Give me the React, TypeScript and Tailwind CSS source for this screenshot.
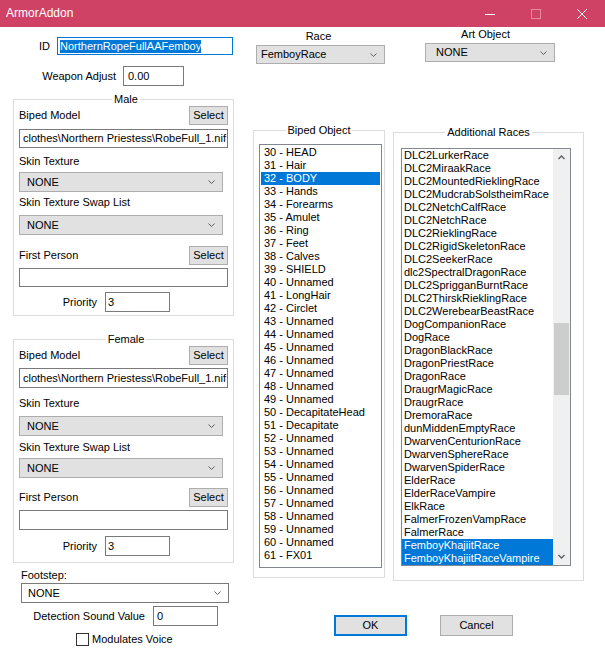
import React from 'react';

const bipedItems = [
  '30 - HEAD', '31 - Hair', '32 - BODY', '33 - Hands', '34 - Forearms', '35 - Amulet', '36 - Ring', '37 - Feet',
  '38 - Calves', '39 - SHIELD', '40 - Unnamed', '41 - LongHair', '42 - Circlet', '43 - Unnamed', '44 - Unnamed',
  '45 - Unnamed', '46 - Unnamed', '47 - Unnamed', '48 - Unnamed', '49 - Unnamed', '50 - DecapitateHead',
  '51 - Decapitate', '52 - Unnamed', '53 - Unnamed', '54 - Unnamed', '55 - Unnamed', '56 - Unnamed', '57 - Unnamed',
  '58 - Unnamed', '59 - Unnamed', '60 - Unnamed', '61 - FX01',
];

const races = [
  'DLC2LurkerRace', 'DLC2MiraakRace', 'DLC2MountedRieklingRace', 'DLC2MudcrabSolstheimRace', 'DLC2NetchCalfRace',
  'DLC2NetchRace', 'DLC2RieklingRace', 'DLC2RigidSkeletonRace', 'DLC2SeekerRace', 'dlc2SpectralDragonRace',
  'DLC2SprigganBurntRace', 'DLC2ThirskRieklingRace', 'DLC2WerebearBeastRace', 'DogCompanionRace', 'DogRace',
  'DragonBlackRace', 'DragonPriestRace', 'DragonRace', 'DraugrMagicRace', 'DraugrRace', 'DremoraRace',
  'dunMiddenEmptyRace', 'DwarvenCenturionRace', 'DwarvenSphereRace', 'DwarvenSpiderRace', 'ElderRace',
  'ElderRaceVampire', 'ElkRace', 'FalmerFrozenVampRace', 'FalmerRace', 'FemboyKhajiitRace', 'FemboyKhajiitRaceVampire',
];

const Chevron = () => (
  <svg width="7" height="4" viewBox="0 0 7 4" className="shrink-0">
    <path d="M0.5 0.5 L3.5 3.5 L6.5 0.5" fill="none" stroke="#5a5a5a" strokeWidth="1" />
  </svg>
);

const ScrollArrow = ({ up }: { up?: boolean }) => (
  <div className="h-[17px] flex items-center justify-center">
    <svg width="7" height="5" viewBox="0 0 7 5">
      <path d={up ? 'M0.5 4 L3.5 1 L6.5 4' : 'M0.5 1 L3.5 4 L6.5 1'} fill="none" stroke="#606060" strokeWidth="1.4" />
    </svg>
  </div>
);

// combobox; white = editable style (Footstep)
const Combo = ({ value, className, white }: { value: string; className: string; white?: boolean }) => (
  <div
    className={`flex items-center justify-between pr-[7px] border ${white ? 'bg-white border-[#7a7a7a]' : 'bg-[#e1e1e1] border-[#adadad]'} ${className}`}
  >
    <span className="whitespace-nowrap">{value}</span>
    <Chevron />
  </div>
);

const TextBox = ({ value, className }: { value?: string; className: string }) => (
  <div className={`flex items-center border border-[#7a7a7a] bg-white whitespace-nowrap overflow-hidden ${className}`}>
    {value}
  </div>
);

const Button = ({ label, className }: { label: string; className: string }) => (
  <div className={`flex items-center justify-center bg-[#e1e1e1] ${className}`}>{label}</div>
);

interface GroupGaps {
  input: string;
  skin: string;
  skinCombo: string;
  swap: string;
  swapCombo: string;
  first: string;
  firstInput: string;
  priority: string;
  bottom: string;
}

const GenderGroup = ({ title, gaps, className }: { title: string; gaps: GroupGaps; className: string }) => (
  <fieldset className={`ml-[13px] w-[221px] border border-[#dcdcdc] pl-[5px] flex flex-col ${gaps.bottom} ${className}`}>
    <legend className="mx-auto px-[2px] leading-[13px]">{title}</legend>
    <div className="flex items-center justify-between w-[209px]">
      <span>Biped Model</span>
      <Button label="Select" className="w-[39px] h-[19px] border border-[#adadad]" />
    </div>
    <TextBox value="clothes\Northern Priestess\RobeFull_1.nif" className={`w-[209px] pl-[3px] ${gaps.input}`} />
    <span className={gaps.skin}>Skin Texture</span>
    <Combo value="NONE" className={`w-[204px] h-[20px] pl-[7px] ${gaps.skinCombo}`} />
    <span className={gaps.swap}>Skin Texture Swap List</span>
    <Combo value="NONE" className={`w-[204px] h-[20px] pl-[7px] ${gaps.swapCombo}`} />
    <div className={`flex items-center justify-between w-[209px] ${gaps.first}`}>
      <span>First Person</span>
      <Button label="Select" className="w-[39px] h-[19px] border border-[#adadad]" />
    </div>
    <TextBox className={`w-[209px] ${gaps.firstInput}`} />
    <div className={`flex items-center ${gaps.priority}`}>
      <span className="w-[78px] text-right">Priority</span>
      <TextBox value="3" className="ml-[8px] w-[65px] h-[20px] pl-[2px]" />
    </div>
  </fieldset>
);

const maleGaps: GroupGaps = {
  input: 'mt-[4px] h-[19px]',
  skin: 'mt-[7px]',
  skinCombo: 'mt-[4px]',
  swap: 'mt-[4px]',
  swapCombo: 'mt-[6px]',
  first: 'mt-[11px]',
  firstInput: 'mt-[3px] h-[19px]',
  priority: 'mt-[5px]',
  bottom: 'pb-[3px]',
};

const femaleGaps: GroupGaps = {
  input: 'mt-[3px] h-[20px]',
  skin: 'mt-[9px]',
  skinCombo: 'mt-[6px]',
  swap: 'mt-[5px]',
  swapCombo: 'mt-[4px]',
  first: 'mt-[10px]',
  firstInput: 'mt-[3px] h-[20px]',
  priority: 'mt-[6px]',
  bottom: 'pb-[6px]',
};

const TitleBar = () => (
  <div className="h-[27px] bg-[#d04265] flex items-center text-white">
    <span className="pl-[6px] text-[12px]">ArmorAddon</span>
    <div className="ml-auto flex h-full">
      <div className="w-[46px] flex items-center justify-center">
        <svg width="10" height="10" viewBox="0 0 10 10">
          <path d="M0 5.5 H10" stroke="#ffffff" strokeWidth="1" />
        </svg>
      </div>
      <div className="w-[46px] flex items-center justify-center">
        <svg width="10" height="10" viewBox="0 0 10 10">
          <rect x="0.5" y="0.5" width="9" height="9" fill="none" stroke="#e58ba2" strokeWidth="1" />
        </svg>
      </div>
      <div className="w-[46px] flex items-center justify-center">
        <svg width="10" height="10" viewBox="0 0 10 10">
          <path d="M0 0 L10 10 M10 0 L0 10" stroke="#ffffff" strokeWidth="1" />
        </svg>
      </div>
    </div>
  </div>
);

export default function App() {
  return (
    <div className="w-[605px] h-[661px] bg-white overflow-hidden font-['Liberation_Sans',Arial,sans-serif] text-[11px] leading-[13px] text-black select-none">
      <TitleBar />
      <div className="flex">
        {/* left column */}
        <div className="w-[253px] shrink-0 flex flex-col">
          <div className="flex items-center mt-[10px]">
            <span className="w-[50px] text-right">ID</span>
            <div className="ml-[7px] w-[176px] h-[18px] border border-[#0078d7] pl-[2px] flex items-center">
              <span className="bg-[#0078d7] text-white">NorthernRopeFullAAFemboy</span>
            </div>
          </div>
          <div className="flex items-center mt-[11px]">
            <span className="w-[116px] text-right">Weapon Adjust</span>
            <TextBox value="0.00" className="ml-[7px] w-[61px] h-[20px] pl-[4px]" />
          </div>
          <GenderGroup title="Male" gaps={maleGaps} className="mt-[7px]" />
          <GenderGroup title="Female" gaps={femaleGaps} className="mt-[17px]" />
          <span className="ml-[21px] mt-[6px]">Footstep:</span>
          <Combo white value="NONE" className="ml-[21px] mt-[1px] w-[208px] h-[20px] pl-[6px]" />
          <div className="flex items-center mt-[3px]">
            <span className="w-[145px] text-right">Detection Sound Value</span>
            <TextBox value="0" className="ml-[8px] w-[65px] h-[20px] pl-[3px]" />
          </div>
          <div className="flex items-center mt-[7px] ml-[76px]">
            <span className="w-[13px] h-[13px] border border-[#333333] bg-white" />
            <span className="ml-[3px]">Modulates Voice</span>
          </div>
        </div>

        {/* right area */}
        <div className="flex flex-col">
          <div className="flex items-start">
            <div className="ml-[3px] mt-[3px] w-[129px] flex flex-col">
              <span className="text-center pr-[4px]">Race</span>
              <Combo value="FemboyRace" className="mt-[2px] h-[19px] pl-[4px]" />
            </div>
            <div className="ml-[40px] mt-[1px] w-[130px] flex flex-col">
              <span className="text-center pr-[9px]">Art Object</span>
              <Combo value="NONE" className="mt-[2px] h-[19px] pl-[10px]" />
            </div>
          </div>

          <div className="flex items-start mt-[60px]">
            <fieldset className="w-[132px] border border-[#dcdcdc] pb-[9px]">
              <legend className="mx-auto px-[2px] leading-[13px]">Biped Object</legend>
              <div className="mt-[7px] ml-[5px] w-[123px] h-[424px] border border-[#828790] p-[1px] overflow-hidden">
                {bipedItems.map((item, i) => (
                  <div
                    key={item}
                    className={`h-[13px] pl-[3px] whitespace-nowrap ${i === 2 ? 'bg-[#0078d7] text-white' : ''}`}
                  >
                    {item}
                  </div>
                ))}
              </div>
            </fieldset>

            <fieldset className="ml-[8px] mt-[2px] w-[191px] border border-[#dcdcdc] pb-[14px]">
              <legend className="mx-auto px-[2px] leading-[13px]">Additional Races</legend>
              <div className="mt-[9px] ml-[7px] w-[170px] h-[418px] border border-[#828790] flex">
                <div className="flex-1 overflow-hidden">
                  {races.map((race, i) => (
                    <div
                      key={race}
                      className={`h-[13px] pl-[2px] whitespace-nowrap ${i >= 30 ? 'bg-[#0078d7] text-white' : ''}`}
                    >
                      {race}
                    </div>
                  ))}
                </div>
                <div className="w-[17px] bg-[#f0f0f0] flex flex-col">
                  <ScrollArrow up />
                  <div className="h-[157px]" />
                  <div className="h-[72px] mx-[1px] bg-[#cdcdcd]" />
                  <div className="flex-1" />
                  <ScrollArrow />
                </div>
              </div>
            </fieldset>
          </div>

          <div className="flex mt-[34px]">
            <Button label="OK" className="ml-[81px] w-[73px] h-[21px] border-2 border-[#0078d7]" />
            <Button label="Cancel" className="ml-[33px] w-[73px] h-[21px] border border-[#adadad]" />
          </div>
        </div>
      </div>
    </div>
  );
}
